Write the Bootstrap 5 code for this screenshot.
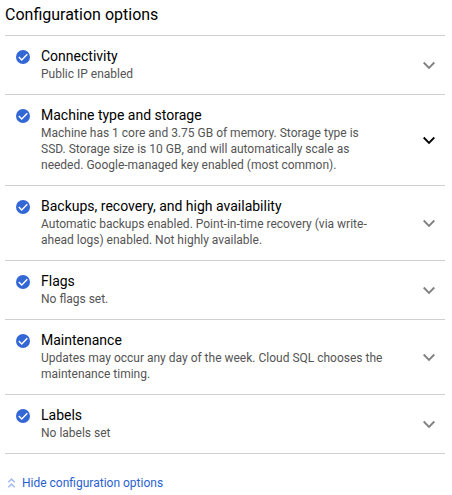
<!DOCTYPE html>
<html lang="en">
<head>
<meta charset="utf-8">
<meta name="viewport" content="width=device-width, initial-scale=1">
<title>Configuration options</title>
<link href="https://cdn.jsdelivr.net/npm/bootstrap@5.3.0/dist/css/bootstrap.min.css" rel="stylesheet">
<script src="https://cdn.jsdelivr.net/npm/bootstrap@5.3.0/dist/js/bootstrap.bundle.min.js" defer></script>
<style>
body{font-family:Roboto,sans-serif;width:452px;height:495px;overflow:hidden;color:#000}
.page-title{font-size:16px;line-height:24px;padding:3px 0 0 5px;height:35px}
.options{width:440px;margin-left:5px;border-top:1px solid #d0d0d0}
.option{border-bottom:1px solid #d0d0d0;padding:11px 9px 12px 11px}
.option-title{font-size:14px;line-height:18px;padding-bottom:1px}
.option-text{font-size:12px;line-height:16px;color:#545454;width:350px}
.option-copy{margin-left:11px;width:350px}
.check{width:14px;height:14px;margin-top:3px}
.chev{width:14px;height:9px;color:#808080;margin-top:1px}
.chev-active{color:#000}
.hide-link{font-size:12px;line-height:16px;color:#2962d0;margin:21px 0 0 7px}
.hide-link svg{width:9px;height:10px;margin-right:6px}
</style>
</head>
<body class="bg-white">
<svg class="d-none">
<symbol id="check" viewBox="0 0 14 14"><circle cx="7" cy="7" r="7" fill="#3367d6"/><path d="M2.800 7.100l2.900 2.800 5.600-5.700" fill="none" stroke="#fff" stroke-width="1.400"/></symbol>
<symbol id="chev" viewBox="0 0 14 9"><path d="M1.700 1.500L7 6.900l5.300-5.400" fill="none" stroke="currentColor" stroke-width="1.800"/></symbol>
</svg>
<h1 class="page-title fw-normal mb-0">Configuration options</h1>
<div class="options">
<div class="option d-flex"><svg class="check flex-shrink-0"><use href="#check"/></svg><div class="option-copy"><div class="option-title">Connectivity</div><div class="option-text">Public IP enabled</div></div><svg class="chev ms-auto align-self-center"><use href="#chev"/></svg></div>
<div class="option d-flex"><svg class="check flex-shrink-0"><use href="#check"/></svg><div class="option-copy"><div class="option-title">Machine type and storage</div><div class="option-text">Machine has 1 core and 3.75 GB of memory. Storage type is<br>SSD. Storage size is 10 GB, and will automatically scale as<br>needed. Google-managed key enabled (most common).</div></div><svg class="chev chev-active ms-auto align-self-center"><use href="#chev"/></svg></div>
<div class="option d-flex"><svg class="check flex-shrink-0"><use href="#check"/></svg><div class="option-copy"><div class="option-title">Backups, recovery, and high availability</div><div class="option-text">Automatic backups enabled. Point-in-time recovery (via write-<br>ahead logs) enabled. Not highly available.</div></div><svg class="chev ms-auto align-self-center"><use href="#chev"/></svg></div>
<div class="option d-flex"><svg class="check flex-shrink-0"><use href="#check"/></svg><div class="option-copy"><div class="option-title">Flags</div><div class="option-text">No flags set.</div></div><svg class="chev ms-auto align-self-center"><use href="#chev"/></svg></div>
<div class="option d-flex"><svg class="check flex-shrink-0"><use href="#check"/></svg><div class="option-copy"><div class="option-title">Maintenance</div><div class="option-text">Updates may occur any day of the week. Cloud SQL chooses the<br>maintenance timing.</div></div><svg class="chev ms-auto align-self-center"><use href="#chev"/></svg></div>
<div class="option d-flex"><svg class="check flex-shrink-0"><use href="#check"/></svg><div class="option-copy"><div class="option-title">Labels</div><div class="option-text">No labels set</div></div><svg class="chev ms-auto align-self-center"><use href="#chev"/></svg></div>
</div>
<a href="#" class="hide-link d-inline-flex align-items-center text-decoration-none"><svg viewBox="0 0 9 10"><path d="M1.300 4.300l3.200-3.200 3.200 3.200M1.300 9.300l3.200-3.200 3.200 3.200" fill="none" stroke="#a3bcee" stroke-width="1.500"/></svg>Hide configuration options</a>
</body>
</html>
